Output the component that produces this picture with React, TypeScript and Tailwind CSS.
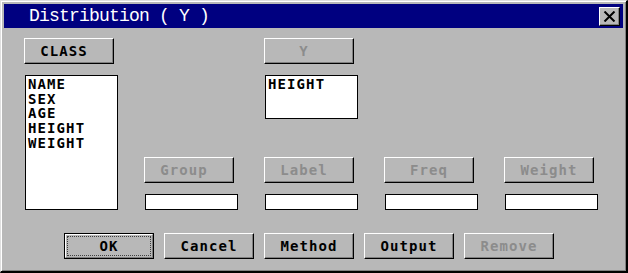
import React from "react";

const btnBase =
  "h-[26px] w-[90px] flex items-center justify-center bg-[#b8b8b8] border-t border-l border-t-white border-l-white border-b border-r border-b-black border-r-black shadow-[inset_-1px_-1px_#808080] font-['DejaVu_Sans_Mono',monospace] font-bold text-[14px] tracking-[1.1px] leading-none";

function Btn({
  label,
  disabled,
  shift,
}: {
  label: string;
  disabled?: boolean;
  shift?: boolean;
}) {
  return (
    <div
      className={
        btnBase +
        (disabled ? " text-[#8c8c8c]" : " text-black") +
        (shift ? " pr-[10px]" : "")
      }
    >
      {label}
    </div>
  );
}

function Field() {
  return <div className="ml-[1px] w-[93px] h-[16px] bg-white border border-black" />;
}

export default function App() {
  return (
    <div className="w-[628px] h-[273px] bg-[#b8b8b8] border-t border-l border-t-[#dfdfdf] border-l-[#dfdfdf] border-b-2 border-r-2 border-b-black border-r-black shadow-[inset_1px_1px_white,inset_-1px_-1px_#808080] p-[3px] flex flex-col">
      {/* Title bar */}
      <div className="h-[24px] bg-[#000080] flex items-center justify-between">
        <span className="pl-[25px] text-white font-['Liberation_Mono',monospace] text-[18px] tracking-[-0.8px] leading-none whitespace-pre">
          Distribution ( Y )
        </span>
        <div className="mr-[3px] w-[21px] h-[19px] bg-[#b8b8b8] border-t border-l border-t-white border-l-white border-b border-r border-b-black border-r-black shadow-[inset_-1px_-1px_#808080] flex items-center justify-center">
          <svg width="13" height="11" viewBox="0 0 13 11">
            <path d="M1.5 0.5 L11.5 10.5 M11.5 0.5 L1.5 10.5" stroke="black" strokeWidth="2" />
          </svg>
        </div>
      </div>

      {/* Body */}
      <div className="pl-[20px] pt-[10px] flex flex-col">
        <div className="flex">
          {/* left column */}
          <div className="w-[120px] flex flex-col">
            <Btn label="CLASS" shift />
            <div className="mt-[11px] ml-[1px] w-[93px] h-[135px] bg-white border border-black pl-[2px] pt-[1px] font-['DejaVu_Sans_Mono',monospace] font-bold text-[14px] tracking-[1.1px] leading-[14.7px] text-black">
              <div>NAME</div>
              <div>SEX</div>
              <div>AGE</div>
              <div>HEIGHT</div>
              <div>WEIGHT</div>
            </div>
          </div>
          {/* right area */}
          <div className="flex flex-col">
            <div className="ml-[120px]">
              <Btn label="Y" disabled shift />
            </div>
            <div className="mt-[11px] ml-[121px] w-[93px] h-[44px] bg-white border border-black pl-[2px] pt-[1px] font-['DejaVu_Sans_Mono',monospace] font-bold text-[14px] tracking-[1.1px] leading-[14.7px] text-black">
              HEIGHT
            </div>
            <div className="mt-[38px] flex gap-[30px]">
              <Btn label="Group" disabled shift />
              <Btn label="Label" disabled shift />
              <Btn label="Freq" disabled />
              <Btn label="Weight" disabled />
            </div>
            <div className="mt-[11px] flex gap-[26px]">
              <Field />
              <Field />
              <Field />
              <Field />
            </div>
          </div>
        </div>

        {/* bottom buttons */}
        <div className="mt-[23px] ml-[40px] flex gap-[10px]">
          <div className="h-[26px] w-[90px] border border-black">
            <div className="h-full w-full bg-[#b8b8b8] border-t border-l border-t-white border-l-white border-b border-r border-b-[#808080] border-r-[#808080] p-[1px]">
              <div className="h-full w-full border border-dotted border-[#404040] flex items-center justify-center font-['DejaVu_Sans_Mono',monospace] font-bold text-[14px] tracking-[1.1px] leading-none text-black">
                OK
              </div>
            </div>
          </div>
          <Btn label="Cancel" />
          <Btn label="Method" />
          <Btn label="Output" />
          <Btn label="Remove" disabled />
        </div>
      </div>
    </div>
  );
}
